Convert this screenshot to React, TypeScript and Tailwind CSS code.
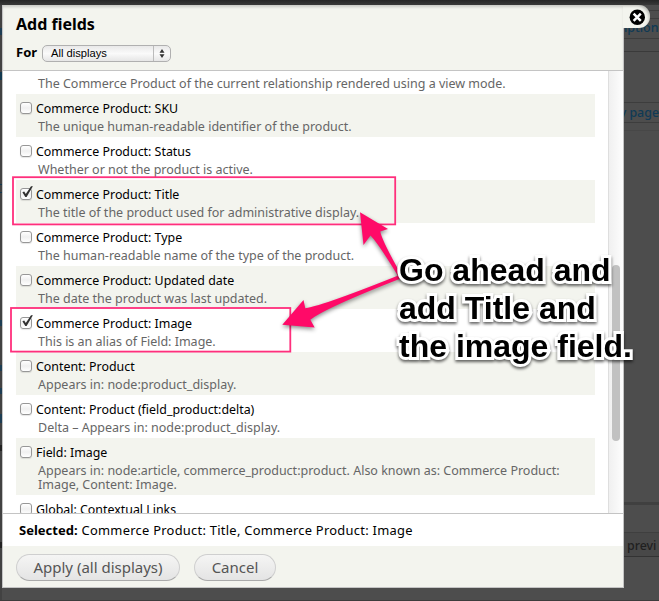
import React from "react";

type Field = {
  name: string;
  lines: string[];
  checked?: boolean;
  tinted?: boolean;
};

const fields: Field[] = [
  { name: "Commerce Product: SKU", lines: ["The unique human-readable identifier of the product."], tinted: true },
  { name: "Commerce Product: Status", lines: ["Whether or not the product is active."] },
  { name: "Commerce Product: Title", lines: ["The title of the product used for administrative display."], checked: true, tinted: true },
  { name: "Commerce Product: Type", lines: ["The human-readable name of the type of the product."] },
  { name: "Commerce Product: Updated date", lines: ["The date the product was last updated."], tinted: true },
  { name: "Commerce Product: Image", lines: ["This is an alias of Field: Image."], checked: true },
  { name: "Content: Product", lines: ["Appears in: node:product_display."], tinted: true },
  { name: "Content: Product (field_product:delta)", lines: ["Delta – Appears in: node:product_display."] },
  {
    name: "Field: Image",
    lines: ["Appears in: node:article, commerce_product:product. Also known as: Commerce Product:", "Image, Content: Image."],
    tinted: true,
  },
  { name: "Global: Contextual Links", lines: [] },
];

const rowHeights = ["h-[18px]", "h-[43px]", "h-[57px]"];

function Checkbox({ checked }: { checked?: boolean }) {
  return (
    <span className="mt-[8px] h-[12px] w-[12px] shrink-0 rounded-[3px] border border-[#979797] bg-gradient-to-b from-white via-[#f0f0f0] to-white shadow-[0_1px_1px_rgba(0,0,0,0.1)]">
      {checked && (
        <svg className="-mt-[4px] -ml-[1px] max-w-none" width="16" height="15" viewBox="0 0 16 15">
          <path d="M2.4 7.2 L4.2 6.4 L5.8 8.9 L11 1.2 L12.9 1.3 L6.6 12 L5.3 12Z" fill="#303030" />
        </svg>
      )}
    </span>
  );
}

function Row({ field }: { field: Field }) {
  return (
    <div className={`shrink-0 pl-[4px] ${rowHeights[field.lines.length]} ${field.tinted ? "bg-[#f3f4ee]" : "bg-white"}`}>
      <div className="flex h-[26px] gap-1">
        <Checkbox checked={field.checked} />
        <span className="pt-[5px] text-[12.4px] leading-[19px] text-black">{field.name}</span>
      </div>
      <div className="pl-[18px] text-[12.5px] leading-[14px] text-[#666]">
        {field.lines.map((line) => (
          <div key={line}>{line}</div>
        ))}
      </div>
    </div>
  );
}

/* Dimmed page to the left of the dialog: slivers of links and rules */
function LeftEdge() {
  return (
    <aside className="flex w-[2px] shrink-0 flex-col bg-[#424242] pt-[28px]">
      <div className="h-[7px] bg-[#1d3d53]" />
      <div className="mt-[37px] h-[8px] bg-[#123950]" />
      <div className="mt-[104px] h-[9px] border-y border-[#123950]" />
      <div className="mt-[127px] h-[6px] bg-[#1d3d53]" />
      <div className="mt-[39px] h-[6px] bg-[#1d3d53]" />
      <div className="mt-[17px] h-[6px] bg-[#1d3d53]" />
      <div className="mt-[20px] h-[9px] bg-[#1d3d53]" />
      <div className="mt-[22px] h-[6px] bg-[#222]" />
      <div className="mt-[91px] h-[6px] bg-[#222]" />
    </aside>
  );
}

/* Dimmed page to the right of the dialog */
function RightEdge() {
  return (
    <aside className="flex w-[35px] shrink-0 flex-col overflow-hidden text-[12.4px] leading-[16px] text-[#0f3a55]">
      <div className="mt-[10px] h-[9px] border-y border-[#3d3d3d]" />
      <div className="h-[20px] border-b border-[#3d3d3d] pt-px font-medium">iption</div>
      <div className="h-[13px] border-b border-[#3a3a3a]" />
      <div className="h-[51px] border-b border-[#3d3d3d]" />
      <div className="flex h-[20px] items-center justify-end border-b border-[#3d3d3d] font-medium">y page</div>
      <div className="h-[8px] border-b border-[#474747]" />
      <div className="mt-[371px] h-[3px] bg-[#404040]" />
      <div className="mt-[27px] flex h-[25px] items-center border-t border-b border-t-[#3f3f3f] border-b-[#333] bg-[#484848] pt-[2px] pl-[3px] font-medium text-[#202020]">
        previ
      </div>
    </aside>
  );
}

function Annotations() {
  return (
    <>
      <svg className="absolute top-0 left-0" width="659" height="601" viewBox="0 0 659 601">
        <g fill="none" stroke="#ff2f7c" strokeWidth="1.8">
          <rect x="13" y="177.2" width="382.2" height="47.2" />
          <rect x="11" y="308" width="279.3" height="43.6" />
        </g>
        <g fill="#ff0a68" className="drop-shadow-[0_2px_2px_rgba(0,0,0,0.45)]">
          <path d="M360 212.3 L388 229 L380.3 231.5 Q382 241 402 276 L398 276 Q378 243 370.5 235.5 L363.5 245Z" />
          <path d="M282.3 324.7 L303.5 300 L305.3 308.3 Q325 305 402 274 L402 278 Q325 308 310.3 319.8 L314.7 327.4Z" />
        </g>
      </svg>
      <div className="absolute top-[251px] left-[399px] font-['Liberation_Sans',Arial,sans-serif] text-[32px] leading-[38px] font-bold text-black [-webkit-text-stroke:6px_white] [paint-order:stroke_fill] drop-shadow-[0_2px_1.5px_rgba(0,0,0,0.6)]">
        <div>Go ahead and</div>
        <div>add Title and</div>
        <div>the image field.</div>
      </div>
    </>
  );
}

function CloseTab() {
  return (
    <div className="absolute top-[5px] left-[623px] flex h-[23px] w-[27px] items-center justify-center rounded-r-[11px] bg-[#f3f4ee] shadow-[inset_-2px_2px_3px_-1px_rgba(0,0,0,0.25)]">
      <svg width="16" height="16" viewBox="0 0 16 16">
        <circle cx="8.3" cy="8.2" r="7.7" fill="#000" />
        <path d="M4.6 4.6 L11.8 11.8 M11.8 4.6 L4.6 11.8" stroke="#fff" strokeWidth="2.5" />
      </svg>
    </div>
  );
}

export default function App() {
  return (
    <div className="relative flex h-[601px] w-[659px] overflow-hidden border-b border-[#3c3c3c] bg-[#4d4d4d] font-['Noto_Sans','Lucida_Grande',sans-serif] whitespace-nowrap">
      <LeftEdge />
      <main className="flex w-[622px] shrink-0 flex-col">
        <div className="-ml-[2px] h-[5px] w-[659px] shrink-0 bg-gradient-to-b from-[#262626] to-[#383838]" />
        <div className="flex h-[583px] flex-col border-r border-b border-l border-[#c4c4c4] bg-white">
          <header className="h-[66px] shrink-0 border-b border-[#c4c4c4] bg-[#f3f4ee] pl-[13px] shadow-[inset_0_3px_3px_-1px_rgba(0,0,0,0.18)]">
            <h1 className="pt-[8px] text-[16px] leading-[22px] font-bold">Add fields</h1>
            <div className="mt-[7px] flex items-center">
              <span className="w-[26px] text-[13px] leading-[20px] font-bold">For</span>
              <div className="mt-[2px] flex h-[17px] w-[129px] items-center rounded-[5px] border border-[#b0b0b0] bg-gradient-to-b from-[#e9e9e9] via-[#fafafa] to-[#e6e6e6] font-['Liberation_Sans',Arial,sans-serif] text-[11.2px]">
                <span className="flex-1 pl-[8px]">All displays</span>
                <span className="flex h-full w-[17px] items-center justify-center border-l border-[#bbb]">
                  <svg width="6" height="9" viewBox="0 0 6 9">
                    <path d="M3 0 L5.5 3.7 H.5Z M3 9 L5.5 5.3 H.5Z" fill="#333" />
                  </svg>
                </span>
              </div>
            </div>
          </header>
          <section className="flex h-[442px] shrink-0 overflow-hidden">
            <div className="flex w-[605px] flex-col pl-[13px]">
              <div className="h-[23px] w-[579px] shrink-0 pt-[6px] pl-[22px] text-[12.5px] leading-[14px] tracking-[-0.01px] text-[#666]">
                The Commerce Product of the current relationship rendered using a view mode.
              </div>
              <div className="w-[579px]">
                {fields.map((field) => (
                  <Row key={field.name} field={field} />
                ))}
              </div>
            </div>
            <div className="flex flex-1 justify-end border-l border-[#dedede] bg-gradient-to-r from-[#f0f0f0] to-[#fdfdfd] pt-[194px] pr-[3px]">
              <div className="h-[176px] w-[8px] rounded-full bg-[#c1c1c1]" />
            </div>
          </section>
          <div className="flex h-[33px] shrink-0 items-baseline gap-1 border-t border-[#c4c4c4] pt-[6px] pl-[16px] text-[13px] leading-[20px]">
            <b>Selected:</b>
            <span className="text-[12.9px] tracking-[0.27px]">Commerce Product: Title, Commerce Product: Image</span>
          </div>
          <footer className="flex flex-1 gap-[14px] bg-[#f3f4ee] pt-[8px] pl-[13px] text-[15px] text-[#555]">
            <button className="h-[27px] w-[164px] rounded-full border border-[#cfcfcf] border-b-[#aaa] bg-gradient-to-b from-[#f5f5f4] to-[#e4e4e4]">Apply (all displays)</button>
            <button className="h-[27px] w-[82px] rounded-full border border-[#cfcfcf] border-b-[#aaa] bg-gradient-to-b from-[#f5f5f4] to-[#e4e4e4]">Cancel</button>
          </footer>
        </div>
      </main>
      <RightEdge />
      <CloseTab />
      <Annotations />
    </div>
  );
}
